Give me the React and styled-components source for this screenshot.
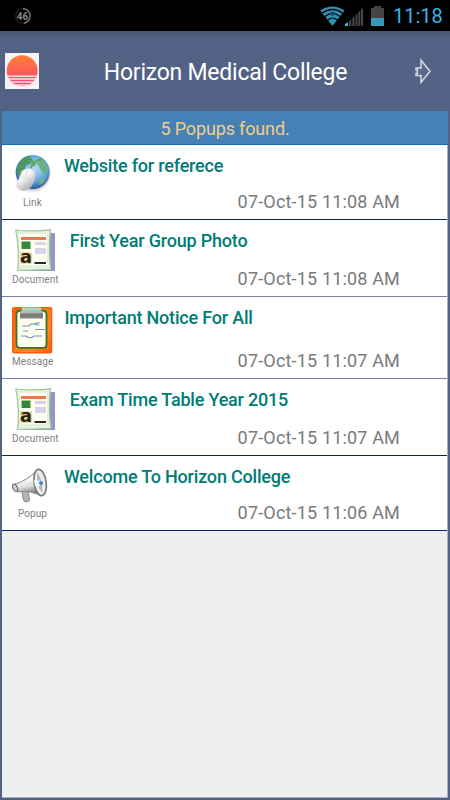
import React from 'react';
import styled, { createGlobalStyle } from 'styled-components';

const GlobalStyle = createGlobalStyle`
  * {
    box-sizing: border-box;
  }
  body {
    margin: 0;
    background-color: #000;
    font-family: Roboto, 'Liberation Sans', sans-serif;
  }
`;

const Screen = styled.div`
  width: 450px;
  height: 800px;
  display: flex;
  flex-direction: column;
  overflow: hidden;
  background-color: #516285;
`;

const StatusBar = styled.div`
  height: 31px;
  flex-shrink: 0;
  display: flex;
  align-items: center;
  justify-content: space-between;
  padding: 0 7px 0 14px;
  background-color: #000;
  svg {
    display: block;
  }
`;

const StatusIcons = styled.div`
  display: flex;
  align-items: center;
  svg + svg {
    margin-top: 3px;
  }
  svg + svg + svg {
    margin: 0 0 0 7px;
  }
`;

const Clock = styled.span`
  width: 50px;
  margin-left: 9px;
  padding-top: 1px;
  font-size: 20px;
  line-height: 31px;
  white-space: nowrap;
  color: #33b5e5;
`;

const Header = styled.header`
  height: 80px;
  flex-shrink: 0;
  display: flex;
  align-items: center;
  justify-content: space-between;
  padding: 0 18px 0 5px;
  background: linear-gradient(#48566f, #516285 6px);
  svg {
    display: block;
  }
`;

const HeaderTitle = styled.h1`
  margin: 2px 0 0 -2px;
  font-size: 23px;
  font-weight: 400;
  letter-spacing: -0.24px;
  white-space: nowrap;
  color: #fff;
`;

const Panel = styled.main`
  flex: 1;
  margin: 0 2px 2px;
  background-color: #efefef;
  border-right: 1px solid #a9b1c4;
  border-bottom: 1px solid #a9b1c4;
`;

const Banner = styled.div`
  height: 34px;
  margin-right: -1px;
  padding-top: 2px;
  border-bottom: 1px solid #0870ac;
  background-color: #4581b4;
  color: #f0cd8a;
  font-size: 18px;
  line-height: 32px;
  letter-spacing: -0.15px;
  text-align: center;
`;

const Row = styled.div`
  height: ${(props) => props.$height}px;
  display: flex;
  gap: 11px;
  padding: 9px 47px 0 10px;
  background-color: #fff;
  border-bottom: 1px solid ${(props) => props.$line || '#0b2463'};
`;

const Kind = styled.div`
  min-width: 41px;
  display: flex;
  flex-direction: column;
  justify-content: space-between;
  padding-top: ${(props) => props.$drop || 0}px;
  padding-bottom: 10px;
  svg {
    display: block;
    margin-left: ${(props) => props.$indent || 0}px;
  }
`;

const Caption = styled.span`
  font-size: 10px;
  line-height: 13px;
  letter-spacing: 0.1px;
  text-align: center;
  color: #808080;
`;

const Details = styled.div`
  flex: 1;
  display: flex;
  flex-direction: column;
  justify-content: space-between;
  padding-bottom: 6px;
`;

const Title = styled.h2`
  margin: 0;
  font-size: 18px;
  font-weight: 500;
  line-height: 23px;
  letter-spacing: -0.2px;
  white-space: nowrap;
  color: #007c76;
`;

const Time = styled.time`
  font-size: 18px;
  line-height: 22px;
  letter-spacing: 0.17px;
  text-align: right;
  color: #7a7a7a;
`;

const BatteryBadge = () => (
  <svg width="18" height="18" viewBox="0 0 18 18">
    <circle cx="9" cy="9" r="7.3" fill="none" stroke="#222" strokeWidth="1.3" />
    <path d="M9 1.7A7.3 7.3 0 0 1 10 16.2" fill="none" stroke="#777" strokeWidth="1.4" />
    <text x="8.6" y="12.7" textAnchor="middle" fontSize="10" fontWeight="700" fill="#888">46</text>
  </svg>
);

const Wifi = () => (
  <svg width="25" height="20" viewBox="0 0 26 20" preserveAspectRatio="none">
    <path d="M0.3 4.6Q13 -3.8 25.4 4.6L13 20Z" fill="#318fb3" />
    <path d="M2.4 7.1Q13 -0.2 23.3 7.1M5.2 10.4Q13 4.5 20.6 10.4M8.2 14Q13 10 17.8 14" fill="none" stroke="#000" strokeWidth="1.2" />
    <circle cx="13" cy="7.6" r="2.4" fill="#15526a" />
  </svg>
);

const Signal = () => (
  <svg width="19" height="18" viewBox="0 0 19 18">
    <path d="M0 18V16L3 14V18Z" fill="#33b5e5" />
    <path d="M4 18V13.3L6.3 11V18ZM7.3 18V10L9.5 8V18ZM10.5 18V7.3L12.5 5.2V18ZM13.3 18V4.4L15.3 2.5V18ZM16 18V1.8L18 0V18Z" fill="#454545" />
  </svg>
);

const Battery = () => (
  <svg width="13" height="20" viewBox="0 0 13 20">
    <path d="M0 2H3V0H10V2H13V12H0Z" fill="#454545" />
    <path d="M0 12H13V20H0Z" fill="#3498bd" />
  </svg>
);

const Logo = () => (
  <svg width="34" height="36" viewBox="0 0 34 36">
    <defs>
      <linearGradient id="sun" x1="0" y1="0" x2="0" y2="1">
        <stop offset="0" stopColor="#ff8039" />
        <stop offset="0.65" stopColor="#ff565c" />
        <stop offset="1" stopColor="#ed4779" />
      </linearGradient>
    </defs>
    <path d="M0 0H34V36H0Z" fill="#f5f5f5" />
    <circle cx="17.2" cy="17.8" r="15.5" fill="url(#sun)" />
    <path d="M1 23.2H33M1 26H33M1 29H33M1 32H33" stroke="#fbe4e9" strokeWidth="1.4" />
  </svg>
);

const NextArrow = () => (
  <svg width="18" height="26" viewBox="0 0 18 26">
    <path d="M7 2.2V10H2V12H3.4V15.6H2V17.6H7V24.4L16 13.3Z" fill="#596a8a" stroke="#d3d8e1" strokeWidth="1.5" />
  </svg>
);

const LinkIcon = () => (
  <svg width="38" height="40" viewBox="0 0 38 40">
    <defs>
      <radialGradient id="globe" cx="0.55" cy="0.4" r="0.6">
        <stop offset="0" stopColor="#b9def6" />
        <stop offset="0.65" stopColor="#62a2da" />
        <stop offset="1" stopColor="#245598" />
      </radialGradient>
      <linearGradient id="mouse" x1="0" y1="0" x2="0.6" y2="1">
        <stop offset="0.45" stopColor="#f7f7f7" />
        <stop offset="1" stopColor="#aaa" />
      </linearGradient>
      <filter id="soft" x="-20%" y="-20%" width="140%" height="140%">
        <feGaussianBlur stdDeviation="1.2" />
      </filter>
    </defs>
    <ellipse cx="18" cy="20.5" rx="16.5" ry="16.5" fill="#c4c4c4" filter="url(#soft)" />
    <circle cx="17.7" cy="18" r="17" fill="url(#globe)" />
    <path d="M4 9Q8 3 14 2L18 6L15 10L11 11L9 17L3 23Q0 15 4 9Z" fill="#4a9863" />
    <path d="M25 4Q32 8 33 15L30 21L27 18L25 14L22 9ZM26 24L31 24L28 29L24 31Z" fill="#6cb184" />
    <path d="M16 14Q17 7 27 5M13 7Q21 6 19 12" fill="none" stroke="#58a95b" strokeWidth="2" />
    <path d="M7 17Q13 12 19 17Q22 21 17 31Q12 39 5 36Q0 33 3 27Z" fill="url(#mouse)" stroke="#ccc" strokeWidth="0.6" />
    <path d="M4 23Q12 22 19 27M12 15L11 23" fill="none" stroke="#d5d5d5" strokeWidth="0.7" />
  </svg>
);

const DocumentIcon = () => (
  <svg width="41" height="43" viewBox="0 0 41 43">
    <path d="M10 4H40V42L7 42Z" fill="#9894c4" />
    <path d="M0.8 1Q18 3 35.5 0.8Q33 20 36 40.5L2.5 41.5Q5 23 0.8 1Z" fill="#e3f1dd" stroke="#9bc998" strokeWidth="1.2" />
    <path d="M4.5 5H32V36H5.5Z" fill="#fffef0" />
    <path d="M6 8H31V11H6Z" fill="#ed7652" />
    <path d="M6.5 12.5H15.5V20H6.5Z" fill="#328b36" />
    <path d="M20 13H31V16H20ZM20 19H31V25H20Z" fill="#d9d3e9" />
    <path d="M5 23H17V35H5Z" fill="#f0dda0" />
    <text x="5" y="34" fontSize="17" fontWeight="700" fontFamily="DejaVu Sans" textLength="12" lengthAdjust="spacingAndGlyphs" fill="#272113">a</text>
    <path d="M19.5 34H31" stroke="#282828" strokeWidth="2" />
  </svg>
);

const MessageIcon = () => (
  <svg width="41" height="47" viewBox="0 0 41 47">
    <defs>
      <linearGradient id="board" x1="0" y1="0" x2="1" y2="1">
        <stop offset="0" stopColor="#f26017" />
        <stop offset="0.7" stopColor="#ff8a20" />
        <stop offset="1" stopColor="#f45b11" />
      </linearGradient>
      <linearGradient id="clip" x1="0" y1="0" x2="0" y2="1">
        <stop offset="0" stopColor="#d2d2d2" />
        <stop offset="0.5" stopColor="#b0b0b0" />
        <stop offset="0.6" stopColor="#747872" />
        <stop offset="1" stopColor="#858985" />
      </linearGradient>
    </defs>
    <rect x="0.8" y="0.8" width="38.7" height="45" rx="1.5" fill="url(#board)" stroke="#ff5a08" strokeWidth="1.6" />
    <rect x="4.5" y="4" width="30" height="36.8" rx="3" fill="#fdfeee" stroke="#38742c" strokeWidth="1.8" />
    <path d="M10 0.5H29V4H31V11.5H8V4H10Z" fill="url(#clip)" />
    <path d="M10 19H17L19 17H23L24 16H28M23 22.5H33M11 24H16M9 29H14L16 30.5H20L22 29H30M21 17L27 18" fill="none" stroke="#7295b9" strokeWidth="1.2" />
  </svg>
);

const PopupIcon = () => (
  <svg width="37" height="36" viewBox="0 0 37 36">
    <defs>
      <linearGradient id="horn" x1="0" y1="0" x2="0.2" y2="1">
        <stop offset="0" stopColor="#999" />
        <stop offset="0.4" stopColor="#fff" />
        <stop offset="0.7" stopColor="#ddd" />
        <stop offset="1" stopColor="#777" />
      </linearGradient>
    </defs>
    <path d="M10 23L11 30Q11 34 15 34Q19 33 17 29L16 22Z" fill="#b4b4b4" stroke="#8a8a8a" />
    <path d="M3 16Q15 13 25 2L29 28Q19 22 5 24Z" fill="url(#horn)" stroke="#888" />
    <ellipse cx="3.2" cy="19.8" rx="2.2" ry="4" fill="#ccc" stroke="#666" transform="rotate(-25 3 20)" />
    <ellipse cx="28.2" cy="14.5" rx="6" ry="13.3" fill="#eee" stroke="#7c7c7c" strokeWidth="1.7" transform="rotate(-8 28 15)" />
    <path d="M25.5 4Q31 13 30.5 25Q23 17 25.5 4Z" fill="#b9b9b9" />
    <path d="M22 12L29 13L28 18L23 18Z" fill="#f8f8f8" />
    <circle cx="29" cy="15" r="2" fill="#3987d5" />
  </svg>
);

const popups = [
  { kind: 'Link', icon: LinkIcon, title: 'Website for referece', time: '07-Oct-15 11:08 AM', height: 75, indent: 3 },
  { kind: 'Document', icon: DocumentIcon, title: 'First Year Group Photo', time: '07-Oct-15 11:08 AM', height: 77, indent: 3, line: '#77809f' },
  { kind: 'Message', icon: MessageIcon, title: 'Important Notice For All', time: '07-Oct-15 11:07 AM', height: 82, drop: 1, line: '#77809f' },
  { kind: 'Document', icon: DocumentIcon, title: 'Exam Time Table Year 2015', time: '07-Oct-15 11:07 AM', height: 77, indent: 3 },
  { kind: 'Popup', icon: PopupIcon, title: 'Welcome To Horizon College', time: '07-Oct-15 11:06 AM', height: 75, drop: 3 },
];

export default function App() {
  return (
    <>
      <GlobalStyle />
      <Screen>
        <StatusBar>
          <BatteryBadge />
          <StatusIcons>
            <Wifi />
            <Signal />
            <Battery />
            <Clock>11:18</Clock>
          </StatusIcons>
        </StatusBar>
        <Header>
          <Logo />
          <HeaderTitle>Horizon Medical College</HeaderTitle>
          <NextArrow />
        </Header>
        <Panel>
          <Banner>5 Popups found.</Banner>
          {popups.map(({ kind, icon: Icon, title, time, height, indent, drop, line }) => (
            <Row key={title} $height={height} $line={line}>
              <Kind $indent={indent} $drop={drop}>
                <Icon />
                <Caption>{kind}</Caption>
              </Kind>
              <Details>
                <Title>{title}</Title>
                <Time>{time}</Time>
              </Details>
            </Row>
          ))}
        </Panel>
      </Screen>
    </>
  );
}
